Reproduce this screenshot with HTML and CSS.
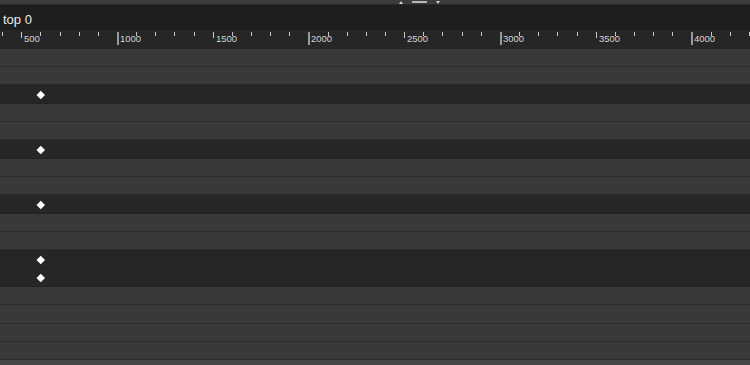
FILE: index.html
```html
<!DOCTYPE html>
<html lang="en">
<head>
    <meta charset="UTF-8">
    <meta name="viewport" content="width=device-width, initial-scale=1.0">
    <title>Timeline</title>
    <link rel="stylesheet" href="styles.css">
</head>
<body>
    <div class="timeline">
        <div class="topbar">
            <div class="grip">
                <span class="tri up"></span>
                <span class="bar"></span>
                <span class="tri down"></span>
            </div>
        </div>

        <div class="title">top 0</div>

        <!-- ruler ticks are built by the script below -->
        <div class="ruler" id="ruler"></div>

        <div class="tracks">
            <div class="row"></div>
            <div class="row"></div>
            <div class="row keyed"><span class="key"></span></div>
            <div class="row"></div>
            <div class="row"></div>
            <div class="row keyed"><span class="key"></span></div>
            <div class="row"></div>
            <div class="row"></div>
            <div class="row keyed"><span class="key"></span></div>
            <div class="row"></div>
            <div class="row"></div>
            <div class="row keyed"><span class="key"></span></div>
            <div class="row keyed"><span class="key"></span></div>
            <div class="row"></div>
            <div class="row"></div>
            <div class="row"></div>
            <div class="row"></div>
            <div class="row hover"></div>
        </div>
    </div>

    <script>
        // 100ms per minor tick, 500ms = 95.75px
        const ruler = document.getElementById('ruler');
        const pxPerMs = 0.1915;
        const origin = -74.55;

        for (let t = 0; t <= 4500; t += 100) {
            const x = Math.round(origin + t * pxPerMs);
            if (x < 0 || x > 750) continue;

            const tick = document.createElement('span');
            tick.className = 'tick';
            if (t % 1000 === 0) tick.classList.add('major');
            else if (t % 500 === 0) tick.classList.add('mid');
            tick.style.left = x + 'px';
            ruler.appendChild(tick);

            if (t % 500 === 0) {
                const label = document.createElement('span');
                label.className = 'label';
                label.textContent = t;
                label.style.left = (x + 3) + 'px';
                ruler.appendChild(label);
            }
        }
    </script>
</body>
</html>
```

FILE: styles.css
```css
* { margin: 0; padding: 0; box-sizing: border-box; }
body {
    font-family: "Liberation Sans", Arial, sans-serif;
    background: #393939;
    color: #e6e6e6;
    overflow: hidden;
}
.timeline { width: 750px; height: 365px; overflow: hidden; }

.topbar {
    height: 5px;
    background: #3c3c3c;
    border-bottom: 1px solid #2b2b2b;
}
.grip {
    display: flex;
    align-items: center;
    gap: 9px;
    margin-left: 399px;
    height: 4px;
}
.tri { width: 0; height: 0; border-left: 2.5px solid transparent; border-right: 2.5px solid transparent; }
.tri.up { border-bottom: 3px solid #d0d0d0; }
.tri.down { border-top: 3px solid #d0d0d0; }
.bar { width: 15px; height: 2px; background: #b8b8b8; }

.title {
    height: 25px;
    background: #1e1e1e;
    font-size: 13px;
    line-height: 29px;
    padding-left: 3px;
    color: #ececec;
}

.ruler {
    position: relative;
    height: 18.67px;
    background: #262626;
}
.tick {
    position: absolute;
    top: 2px;
    width: 1px;
    height: 4px;
    background: #c8c8c8;
}
.tick.mid { height: 6px; }
.tick.major { height: 13px; width: 2px; background: #9a9a9a; }
.label {
    position: absolute;
    top: 2.5px;
    font-size: 9.5px;
    line-height: 11px;
    color: #d4d4d4;
}

.row {
    display: flex;
    align-items: center;
    height: 18.333px;
    padding-left: 38px;
    background: #393939;
    border-bottom: 1px solid #2a2a2a;
}
.row.keyed { background: #262626; border-bottom-color: #222; }
.row.hover { background: #464646; }
.key {
    width: 5.5px;
    height: 5.5px;
    background: #fff;
    transform: rotate(45deg);
    margin-top: 1px;
}
```
